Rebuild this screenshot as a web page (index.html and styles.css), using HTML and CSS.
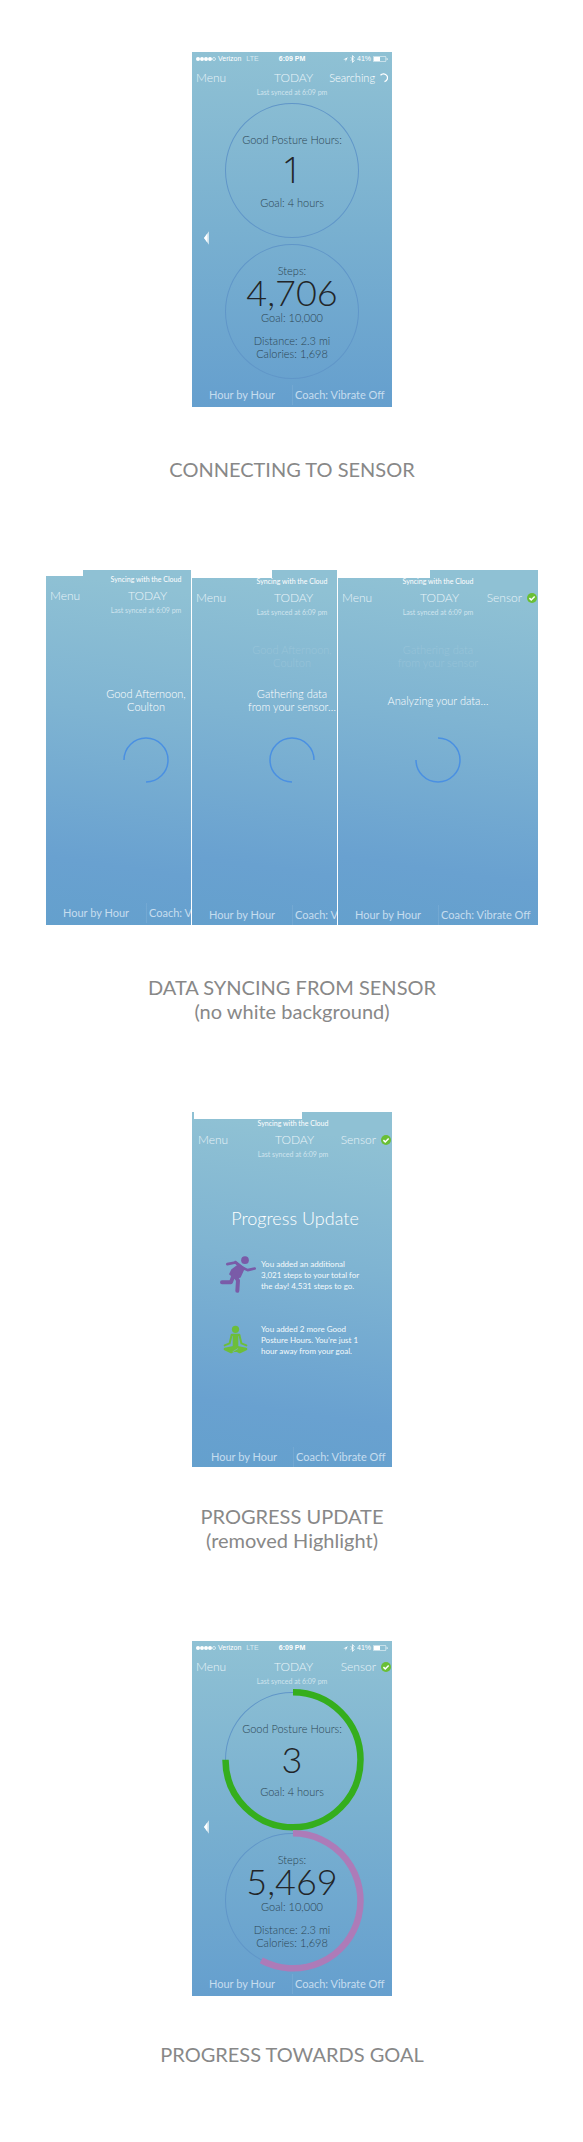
FILE: index.html
```html
<!DOCTYPE html>
<html lang="en">
<head>
<meta charset="utf-8">
<meta name="viewport" content="width=device-width, initial-scale=1">
<title>Sensor app screens</title>
<link rel="stylesheet" href="styles.css">
</head>
<body>
<svg class="defs" aria-hidden="true">
  <symbol id="check" viewBox="0 0 20 20"><circle cx="10" cy="10" r="10" fill="#6abf35"/><path d="M4.8 10.2l3.7 3.6 6.8-7" fill="none" stroke="#fff" stroke-width="3"/></symbol>
  <symbol id="plane" viewBox="0 0 10 10"><path d="M9.500.5L.5 4.800h4.700v4.700z" fill="#fff"/></symbol>
  <symbol id="bluetooth" viewBox="0 0 8 14"><path d="M1 4l6 6-3 3V1l3 3-6 6" fill="none" stroke="#fff" stroke-width="1.400"/></symbol>
  <symbol id="battery" viewBox="0 0 30 12"><rect x=".7" y=".7" width="25" height="10.600" rx="1.500" fill="none" stroke="#fff" stroke-width="1.200"/><rect x="2" y="2" width="12" height="8" fill="#fff"/><path d="M27.500 4v4q2-.5 2-2t-2-2" fill="#fff"/></symbol>
</svg>
<main class="board">

  <section class="step">
    <div class="frames">
      <article class="screen">
        <div class="status">
          <span class="carrier"><i class="dot"></i><i class="dot"></i><i class="dot"></i><i class="dot"></i><i class="dot empty"></i><span>Verizon</span><span class="lte">LTE</span></span>
          <strong>6:09 PM</strong>
          <span class="power"><svg class="plane"><use href="#plane"/></svg><svg class="bt"><use href="#bluetooth"/></svg><span>41%</span><svg class="battery"><use href="#battery"/></svg></span>
        </div>
        <header class="nav">
          <button type="button">Menu</button><h2>TODAY</h2>
          <button type="button" class="sensor searching">Searching <svg viewBox="0 0 10 10"><path d="M2.500 2.200A4 4 0 1 1 6.500 8.700" fill="none" stroke="#fff" stroke-width="1.300"/></svg></button>
        </header>
        <p class="synced">Last synced at 6:09 pm</p>
        <div class="dial posture"><p>Good Posture Hours:</p><strong class="one">1</strong><p>Goal: 4 hours</p></div>
        <button type="button" class="back" aria-label="Back"><svg viewBox="0 0 6 16"><path d="M6 0L0 8l6 8z" fill="#cfe3ee"/><path d="M4 2.500L0 8l4 5.500z" fill="#fff"/></svg></button>
        <div class="dial steps"><p>Steps:</p><strong>4,706</strong><p>Goal: 10,000</p><p class="extra">Distance: 2.3 mi<br>Calories: 1,698</p></div>
        <footer class="tabs"><button type="button">Hour by Hour</button><button type="button">Coach: Vibrate Off</button></footer>
      </article>
    </div>
    <h1 class="caption gap-l">CONNECTING TO SENSOR</h1>
  </section>

  <section class="step">
    <div class="frames">
      <div class="crop">
        <article class="screen tilt early">
          <div class="notch small"></div>
          <p class="cloud">Syncing with the Cloud</p>
          <header class="nav"><button type="button">Menu</button><h2>TODAY</h2></header>
          <p class="synced">Last synced at 6:09 pm</p>
          <p class="ghost"></p>
          <p class="message">Good Afternoon,<br>Coulton</p>
          <svg class="spinner" viewBox="0 0 46 46"><path d="M1 23A22 22 0 1 1 23 45"/></svg>
          <footer class="tabs"><button type="button">Hour by Hour</button><button type="button">Coach: Vibrate Off</button></footer>
        </article>
      </div>
      <div class="crop">
        <article class="screen tilt low">
          <div class="notch medium"></div>
          <p class="cloud">Syncing with the Cloud</p>
          <header class="nav"><button type="button">Menu</button><h2>TODAY</h2></header>
          <p class="synced">Last synced at 6:09 pm</p>
          <p class="ghost">Good Afternoon,<br>Coulton</p>
          <p class="message">Gathering data<br>from your sensor…</p>
          <svg class="spinner" viewBox="0 0 46 46"><path d="M23 45A22 22 0 1 1 45 23"/></svg>
          <footer class="tabs"><button type="button">Hour by Hour</button><button type="button">Coach: Vibrate Off</button></footer>
        </article>
      </div>
      <article class="screen tilt low">
        <div class="notch large"></div>
        <p class="cloud">Syncing with the Cloud</p>
        <header class="nav"><button type="button">Menu</button><h2>TODAY</h2><button type="button" class="sensor">Sensor <svg><use href="#check"/></svg></button></header>
        <p class="synced">Last synced at 6:09 pm</p>
        <p class="ghost">Gathering data<br>from your sensor</p>
        <p class="message">Analyzing your data…</p>
        <svg class="spinner" viewBox="0 0 46 46"><path d="M23 1A22 22 0 1 1 1 23"/></svg>
        <footer class="tabs"><button type="button">Hour by Hour</button><button type="button">Coach: Vibrate Off</button></footer>
      </article>
    </div>
    <h1 class="caption gap-l">DATA SYNCING FROM SENSOR<br>(no white background)</h1>
  </section>

  <section class="step">
    <div class="frames">
      <article class="screen tilt low shifted">
        <div class="notch wide"></div>
        <p class="cloud">Syncing with the Cloud</p>
        <header class="nav"><button type="button">Menu</button><h2>TODAY</h2><button type="button" class="sensor">Sensor <svg><use href="#check"/></svg></button></header>
        <p class="synced">Last synced at 6:09 pm</p>
        <h3 class="update">Progress Update</h3>
        <ul class="news">
          <li>
            <svg viewBox="0 0 108 110" fill="none" stroke="#7a5ba8" stroke-linecap="round" stroke-linejoin="round"><circle cx="75" cy="12" r="11.500" fill="#7a5ba8" stroke="none"/><path d="M22 24l24-5 20 15 17 8 21-5" stroke-width="8"/><path d="M46 16L72 36 60 62 46 66 30 54 36 41 54 28z" fill="#7a5ba8" stroke-width="5"/><path d="M42 54l-9 24H6M44 58l10 15-2 31" stroke-width="12"/></svg>
            <p>You added an additional<br>3,021 steps to your total for<br>the day! 4,531 steps to go.</p>
          </li>
          <li>
            <svg class="sit" viewBox="0 0 76 86" fill="none" stroke="#6dbe3b" stroke-linecap="round" stroke-linejoin="round"><circle cx="38" cy="12" r="11" fill="#6dbe3b" stroke="none"/><path d="M26 30L20 55 5 61M50 30l6 25 15 6" stroke-width="6"/><path d="M27 29h22" stroke-width="7"/><path d="M32 30h12v36H32z" fill="#6dbe3b" stroke-width="5"/><path d="M6 72l26-5 8 5-15 9zM70 72l-26-5-8 6 15 8z" fill="#6dbe3b" stroke-width="8"/><path d="M30 80l15-9" stroke="#7db2d2" stroke-width="2"/></svg>
            <p>You added 2 more Good<br>Posture Hours. You’re just 1<br>hour away from your goal.</p>
          </li>
        </ul>
        <footer class="tabs"><button type="button">Hour by Hour</button><button type="button">Coach: Vibrate Off</button></footer>
      </article>
    </div>
    <h1 class="caption gap-s">PROGRESS UPDATE<br>(removed Highlight)</h1>
  </section>

  <section class="step">
    <div class="frames">
      <article class="screen">
        <div class="status">
          <span class="carrier"><i class="dot"></i><i class="dot"></i><i class="dot"></i><i class="dot"></i><i class="dot empty"></i><span>Verizon</span><span class="lte">LTE</span></span>
          <strong>6:09 PM</strong>
          <span class="power"><svg class="plane"><use href="#plane"/></svg><svg class="bt"><use href="#bluetooth"/></svg><span>41%</span><svg class="battery"><use href="#battery"/></svg></span>
        </div>
        <header class="nav"><button type="button">Menu</button><h2>TODAY</h2><button type="button" class="sensor">Sensor <svg><use href="#check"/></svg></button></header>
        <p class="synced">Last synced at 6:09 pm</p>
        <div class="dial posture"><svg class="arc" viewBox="0 0 142 142"><path d="M71 3.300A67.500 67.500 0 1 1 3.500 70.800" stroke="#35ae1d"/></svg><p>Good Posture Hours:</p><strong>3</strong><p>Goal: 4 hours</p></div>
        <button type="button" class="back" aria-label="Back"><svg viewBox="0 0 6 16"><path d="M6 0L0 8l6 8z" fill="#cfe3ee"/><path d="M4 2.500L0 8l4 5.500z" fill="#fff"/></svg></button>
        <div class="dial steps"><svg class="arc" viewBox="0 0 142 142"><path d="M71 3.300A67.500 67.500 0 1 1 39.300 130.400" stroke="#ad7bb8"/></svg><p>Steps:</p><strong>5,469</strong><p>Goal: 10,000</p><p class="extra">Distance: 2.3 mi<br>Calories: 1,698</p></div>
        <footer class="tabs"><button type="button">Hour by Hour</button><button type="button">Coach: Vibrate Off</button></footer>
      </article>
    </div>
    <h1 class="caption gap-m">PROGRESS TOWARDS GOAL</h1>
  </section>

</main>
</body>
</html>
```
FILE: styles.css
```css
* { box-sizing: border-box; }
body { margin: 0; background: #fff; font-family: Lato, "Open Sans", sans-serif; }
p, h1, h2, h3, ul { margin: 0; padding: 0; font-weight: inherit; }
svg { display: block; }
button { border: 0; padding: 0; background: none; color: inherit; font: inherit; white-space: nowrap; cursor: pointer; }
.defs { position: absolute; width: 0; height: 0; }

.board { display: flex; flex-direction: column; gap: 89px; padding: 52px 0 76px 1px; }
.step { display: flex; flex-direction: column; align-items: center; }
.frames { display: flex; justify-content: center; gap: 1px; }
.crop { width: 145px; overflow: hidden; }
.caption { color: #888; font-size: 20px; line-height: 24px; font-weight: 400; text-align: center; }
.gap-l { margin-top: 50px; }
.gap-m { margin-top: 46px; }
.gap-s { margin-top: 37px; }

.screen {
  position: relative;
  display: flex;
  flex-direction: column;
  width: 200px;
  min-height: 355px;
  overflow: hidden;
  color: #e8f3f8;
  font-weight: 300;
  background: linear-gradient(180deg, #8fc1d4 0%, #79b0d0 50%, #659fce 100%);
}
.tilt { background: linear-gradient(188deg, #8fc1d4 8%, #7fb4d2 42%, #69a1d0 82%, #64a0cd 100%); }

.status {
  display: grid;
  grid-template-columns: 1fr auto 1fr;
  align-items: center;
  height: 14px;
  margin-bottom: 2px;
  padding: 0 4px;
  color: #fff;
  font: 7px/10px "Liberation Sans", Arial, sans-serif;
}
.carrier, .power { display: flex; align-items: center; }
.carrier .dot { width: 4px; height: 4px; border-radius: 50%; background: #fff; }
.carrier .empty { margin-right: 2px; border: 1px solid #d8eaf1; background: none; }
.lte { margin-left: 5px; color: #d8eaf1; }
.power { justify-content: flex-end; gap: 2px; }
.plane { width: 5px; height: 5px; }
.bt { width: 5px; height: 8px; }
.battery { width: 15px; height: 6px; }

.nav { display: grid; grid-template-columns: 1fr auto 1fr; align-items: center; height: 20px; padding: 0 1px 0 4px; font-size: 12px; line-height: 20px; }
.nav button { justify-self: start; }
.nav h2 { font-size: 12px; }
.nav .sensor { display: flex; align-items: center; justify-self: end; gap: 5px; }
.sensor svg { width: 10px; height: 10px; }
.nav .searching { gap: 3px; padding-right: 3px; color: #fff; font-size: 11px; }
.synced { color: #cfe4ee; font-size: 7px; font-weight: 400; line-height: 9px; text-align: center; }

.dial {
  position: relative;
  align-self: center;
  width: 134px;
  height: 135px;
  margin-top: 6px;
  border: 1px solid #6096c8;
  border-radius: 50%;
  color: #2c4552;
  font-size: 11px;
  line-height: 13px;
  text-align: center;
  white-space: nowrap;
}
.dial strong { display: block; color: #222528; font-size: 36px; font-weight: 300; }
.posture { padding-top: 29px; }
.posture strong { padding: 2px 0 4px; line-height: 44px; }
.posture .one { font-family: "Open Sans", sans-serif; }
.steps { padding-top: 19px; }
.steps strong { padding-bottom: 3px; line-height: 31px; }
.extra { margin-top: 10px; }
.arc { position: absolute; top: -4px; left: -4px; width: 142px; height: 142px; }
.arc path { fill: none; stroke-width: 6.500; }
.back { position: absolute; top: 178px; left: 12px; }
.back svg { width: 5px; height: 16px; }

.tabs { display: grid; grid-template-columns: 1fr 1fr; align-items: center; height: 24px; margin-top: auto; font-size: 11px; font-weight: 400; line-height: 20px; color: #c6ddee; }
.tabs button { padding-left: 17px; text-align: left; }
.tabs button + button { padding-left: 2px; border-left: 1px solid #73a8d2; }

.low .tabs { height: 20px; }
.shifted { padding-left: 2px; }
.notch { position: absolute; top: 0; left: 0; height: 8px; background: #fff; }
.small { width: 37px; height: 6px; }
.medium { width: 80px; }
.large { width: 92px; }
.wide { left: 2px; width: 108px; height: 7px; }
.cloud { padding-top: 5px; color: #fff; font-size: 7px; font-weight: 400; line-height: 13px; text-align: center; }
.early .cloud { padding-top: 3px; }
.ghost, .message { min-height: 26px; font-size: 11px; line-height: 13px; text-align: center; }
.ghost { margin-top: 26px; opacity: .16; }
.early .ghost { margin-top: 28px; }
.message { display: flex; align-items: center; justify-content: center; margin-top: 18px; color: #fff; }
.spinner { align-self: center; width: 46px; height: 46px; margin-top: 24px; fill: none; stroke: #4a90e2; stroke-width: 1.500; }

.update { margin-top: 47px; padding-left: 4px; color: #fff; font-size: 18px; line-height: 24px; text-align: center; }
.news { display: grid; gap: 31px; margin-top: 29px; padding-left: 26px; list-style: none; color: #f4fafc; font-size: 8px; font-weight: 400; line-height: 11px; }
.news li { display: grid; grid-template-columns: 36px auto; justify-content: start; gap: 5px; white-space: nowrap; }
.news svg { width: 36px; height: 37px; margin-top: -3px; }
.news .sit { width: 25px; height: 29px; margin: 1px 0 0 3px; }
```
